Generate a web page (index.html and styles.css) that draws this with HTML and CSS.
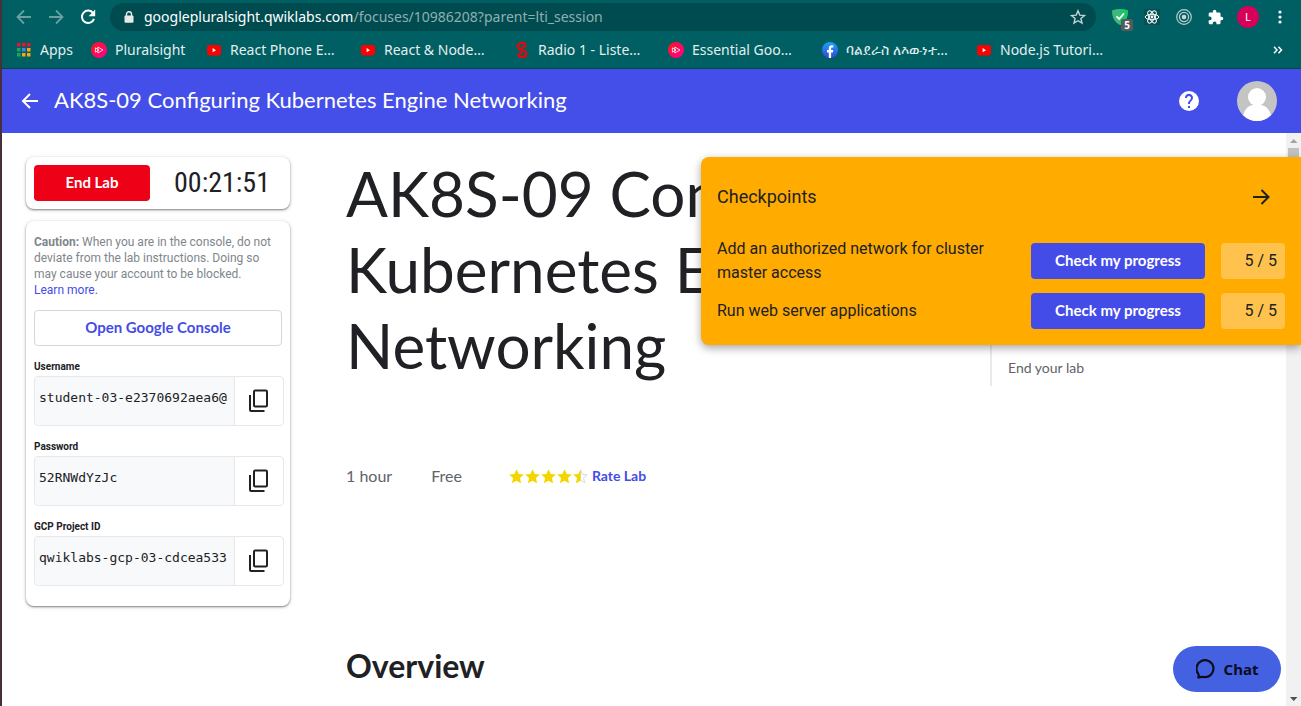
FILE: index.html
```html
<!DOCTYPE html>
<html lang="en">
<head>
<meta charset="utf-8">
<title>AK8S-09 Configuring Kubernetes Engine Networking</title>
<link rel="stylesheet" href="styles.css">
</head>
<body>
<svg class="defs" aria-hidden="true">
  <defs>
    <linearGradient id="pink" x1="0" y1="0" x2="1" y2="1"><stop offset="0" stop-color="#ff1517"/><stop offset="1" stop-color="#ff0095"/></linearGradient>
    <linearGradient id="fbblue" x1="0" y1="0" x2="0" y2="1"><stop offset="0" stop-color="#18a4f8"/><stop offset="1" stop-color="#3a45dc"/></linearGradient>
  </defs>
  <symbol id="play" viewBox="0 0 16 16"><circle cx="8" cy="8" r="8" fill="url(#pink)"/><path d="M6.8 5 12 8 6.800 11ZM4.400 5.800 8 8 4.400 10.200Z" fill="none" stroke="#fff" stroke-width=".8"/></symbol>
  <symbol id="tube" viewBox="0 0 16 16"><rect x="1" y="3" width="14" height="10.5" rx="2.4" fill="#f00"/><path d="M6.6 6.1v4.2L10 8.2z" fill="#fff"/></symbol>
  <symbol id="copy" viewBox="0 0 24 24"><rect x="7" y="1.500" width="13" height="16" rx="1.200" fill="none" stroke="#202124" stroke-width="2"/><path d="M3 6v15a1 1 0 0 0 1 1H17.500" fill="none" stroke="#202124" stroke-width="2"/></symbol>
  <symbol id="star" viewBox="0 0 16 16"><path d="M8 .3l2.300 5 5.500.6-4.100 3.700 1.200 5.600L8 12.500l-4.900 2.700 1.200-5.600L.2 5.900l5.500-.6z"/></symbol>
</svg>

<div class="browser">
  <nav class="toolbar" aria-label="Browser">
    <button class="tool dim" aria-label="Back"><svg viewBox="0 0 16 16"><path d="M15 8H2M8 1.500 1.500 8 8 14.500" fill="none" stroke="currentColor" stroke-width="1.800"/></svg></button>
    <button class="tool dim" aria-label="Forward"><svg viewBox="0 0 16 16"><path d="M1 8h13M8 1.500 14.500 8 8 14.500" fill="none" stroke="currentColor" stroke-width="1.800"/></svg></button>
    <button class="tool" aria-label="Reload"><svg viewBox="0 0 16 16"><path d="M13.200 4.200A6.200 6.200 0 1 0 14 9.800" fill="none" stroke="currentColor" stroke-width="2"/><path d="M15.200.6v6.600H8.600z" fill="currentColor"/></svg></button>
    <div class="address">
      <svg class="lock" viewBox="0 0 10 12"><path d="M2.500 5V3.200a2.500 2.500 0 0 1 5 0V5" fill="none" stroke="#e8eaea" stroke-width="1.400"/><rect x=".5" y="4.600" width="9" height="7.200" rx="1" fill="#e8eaea"/></svg>
      <p class="url">googlepluralsight.qwiklabs.com<span>/focuses/10986208?parent=lti_session</span></p>
      <button class="bookmark-star" aria-label="Bookmark this page"><svg viewBox="0 0 16 16"><path d="M8 1.800l1.800 4.300 4.700.4-3.600 3 1.100 4.600L8 11.700l-4 2.400 1.100-4.600-3.600-3 4.700-.4z" fill="none" stroke="#c4d3d4" stroke-width="1.400"/></svg></button>
    </div>
    <div class="extensions">
    <button class="ext shield" aria-label="Ad blocker, 5 blocked"><svg viewBox="0 0 16 16"><path d="M0 1.500Q4-.2 8 0q4-.2 8 1.500C16 9 13 13.500 8 16 3 13.500 0 9 0 1.500z" fill="#3cb878"/><path d="M8 0q4-.2 8 1.500C16 9 13 13.500 8 16z" fill="#19c46a"/><path d="M4.500 7.300 7.200 10l4.800-5.600" fill="none" stroke="#fff" stroke-width="1.800"/></svg><span class="count">5</span></button>
    <button class="ext" aria-label="React developer tools"><svg viewBox="0 0 16 16"><path d="M0 0h16v16H0z" fill="#064f52"/><g fill="none" stroke="#fff" stroke-width="1"><ellipse cx="8" cy="8" rx="6.800" ry="2.700"/><ellipse cx="8" cy="8" rx="6.800" ry="2.700" transform="rotate(60 8 8)"/><ellipse cx="8" cy="8" rx="6.800" ry="2.700" transform="rotate(120 8 8)"/></g><circle cx="8" cy="8" r="1.400" fill="#fff"/></svg></button>
    <button class="ext" aria-label="Recorder"><svg viewBox="0 0 16 16"><g fill="none" stroke="#b9cbcc" stroke-width="1.200"><circle cx="8" cy="8" r="7.300"/><circle cx="8" cy="8" r="4.600"/></g><circle cx="8" cy="8" r="2.300" fill="#c8d6d7"/></svg></button>
    <button class="ext" aria-label="Extensions"><svg viewBox="1 0 23 23"><path fill="#fff" d="M20.500 11H19V7a2 2 0 0 0-2-2h-4V3.500a2.500 2.500 0 0 0-5 0V5H4a2 2 0 0 0-2 2v3.800h1.500a2.700 2.700 0 0 1 0 5.400H2V20a2 2 0 0 0 2 2h3.800v-1.500a2.700 2.700 0 0 1 5.400 0V22H17a2 2 0 0 0 2-2v-4h1.500a2.500 2.500 0 0 0 0-5z"/></svg></button>
    </div>
    <button class="profile" aria-label="Profile">L</button>
    <button class="kebab" aria-label="Menu"><svg viewBox="0 0 4 14"><g fill="#fff"><circle cx="2" cy="2" r="1.600"/><circle cx="2" cy="7" r="1.600"/><circle cx="2" cy="12" r="1.600"/></g></svg></button>
  </nav>
  <nav class="bookmarks" aria-label="Bookmarks">
    <a class="mark apps" href="#"><svg viewBox="-1 -1 16 16"><path fill="#f01030" d="M0 0h3.500v3.500H0zM5 0h3.500v3.500H5zM10 0h3.500v3.500H10z"/><path fill="#18a85a" d="M0 5h3.500v3.500H0zM0 10h3.500v3.500H0z"/><path fill="#4285f4" d="M5 5h3.500v3.500H5z"/><path fill="#fba90a" d="M10 5h3.500v3.500H10zM5 10h3.500v3.500H5zM10 10h3.500v3.500H10z"/></svg><span>Apps</span></a>
    <a class="mark plural" href="#"><svg><use href="#play"/></svg><span>Pluralsight</span></a>
    <a class="mark" href="#"><svg><use href="#tube"/></svg><span>React Phone E…</span></a>
    <a class="mark" href="#"><svg><use href="#tube"/></svg><span>React &amp; Node…</span></a>
    <a class="mark" href="#"><svg viewBox="0 0 16 16"><path d="M11.800 4.500C11.800 2 10.200 1 8 1 5.500 1 3.800 2.300 3.800 4.300 3.800 6 5 6.800 6.500 7.500L9.500 9M4.200 11.500C4.200 14 5.800 15 8 15c2.500 0 4.200-1.300 4.200-3.300C12.200 10 11 9.200 9.500 8.500L6.500 7" fill="none" stroke="#f40008" stroke-width="2.200"/><path d="M7.500 4 11 6M5 10l3.500 2" fill="none" stroke="#f40008" stroke-width="1.700"/></svg><span>Radio 1 - Liste…</span></a>
    <a class="mark" href="#"><svg><use href="#play"/></svg><span>Essential Goo…</span></a>
    <a class="mark" href="#"><svg viewBox="0 0 16 16"><circle cx="8" cy="8" r="8" fill="url(#fbblue)"/><path d="M6.800 16v-5.600H5V8h1.800V6.300c0-2 1.200-3 3-3l1.500.1v2h-1c-.9 0-1.200.5-1.200 1.200V8h2.200l-.4 2.400H9.100V16z" fill="#fff"/></svg><span>ባልደራስ ለእውነተ…</span></a>
    <a class="mark" href="#"><svg><use href="#tube"/></svg><span>Node.js Tutori…</span></a>
    <button class="more" aria-label="More bookmarks"><svg viewBox="0 0 10 8"><path d="m1 .8 3 3.200-3 3.200M5.500.8l3 3.200-3 3.200" fill="none" stroke="#fff" stroke-width="1.500"/></svg></button>
  </nav>
</div>

<div class="page">
  <header class="header">
    <a class="back" href="#" aria-label="Back"><svg viewBox="0 0 18 18"><path d="M17 9H2M9 2 2 9l7 7" fill="none" stroke="#fff" stroke-width="2"/></svg></a>
    <p class="lab-name">AK8S-09 Configuring Kubernetes Engine Networking</p>
    <button class="help" aria-label="Help"><svg viewBox="0 0 20 20"><path fill="#fff" d="M10 0a10 10 0 1 0 0 20 10 10 0 0 0 0-20zm1 17H9v-2h2zm2.070-7.750-.9.920C11.450 10.900 11 11.500 11 13H9v-.5c0-1.100.450-2.100 1.170-2.830l1.240-1.260A2 2 0 1 0 8 7H6a4 4 0 1 1 7.070 2.250z"/></svg></button>
    <button class="avatar" aria-label="Account"><svg viewBox="0 0 40 40"><circle cx="20" cy="20" r="20" fill="#c4c4c4"/><circle cx="20" cy="16" r="9" fill="#fff"/><path d="M6 34Q9 25 15.500 24h9Q31 25 34 34 28 40 20 40T6 34z" fill="#fff"/></svg></button>
  </header>

  <div class="body">
    <div class="content">
      <aside class="side">
        <section class="card timer-card">
          <button class="end">End Lab</button>
          <time class="timer">00:21:51</time>
        </section>
        <section class="card access">
          <p class="caution"><strong>Caution:</strong> When you are in the console, do not deviate from the lab instructions. Doing so may cause your account to be blocked. <a href="#">Learn more.</a></p>
          <button class="console">Open Google Console</button>
          <div class="field"><label for="user">Username</label>
            <div class="row"><input id="user" readonly value="student-03-e2370692aea6@"><button aria-label="Copy username"><svg><use href="#copy"/></svg></button></div></div>
          <div class="field"><label for="pass">Password</label>
            <div class="row"><input id="pass" readonly value="52RNWdYzJc"><button aria-label="Copy password"><svg><use href="#copy"/></svg></button></div></div>
          <div class="field"><label for="proj">GCP Project ID</label>
            <div class="row"><input id="proj" readonly value="qwiklabs-gcp-03-cdcea533"><button aria-label="Copy project ID"><svg><use href="#copy"/></svg></button></div></div>
        </section>
      </aside>
      <main class="main">
        <h1>AK8S-09 Configuring Kubernetes Engine Networking</h1>
        <div class="meta">
          <span class="fact">1 hour</span><span class="fact">Free</span>
          <span class="stars" role="img" aria-label="4.5 stars"><svg><use href="#star"/></svg><svg><use href="#star"/></svg><svg><use href="#star"/></svg><svg><use href="#star"/></svg><svg viewBox="0 0 16 16"><path fill="#fff" stroke="#ccc" stroke-width=".8" d="M8 1.200l2 4.500 5 .5-3.800 3.300 1.200 5L8 12z"/><path d="M8 .3v12.200l-4.900 2.700 1.200-5.600L.2 5.900l5.500-.6z"/></svg></span>
          <a class="rate" href="#">Rate Lab</a>
        </div>
        <h2>Overview</h2>
      </main>
      <nav class="outline" aria-label="Lab outline"><a href="#">End your lab</a></nav>
    </div>
    <div class="scrollbar" aria-hidden="true">
      <svg viewBox="0 0 15 15"><path d="M4 10h7.500L7.700 6z" fill="#a3a3a3"/></svg>
      <div class="thumb"></div>
      <svg viewBox="0 0 15 15"><path d="M4 6h7.500L7.700 10z" fill="#505050"/></svg>
    </div>

    <section class="checkpoints" aria-label="Checkpoints">
      <div class="cp-head"><h3>Checkpoints</h3><button aria-label="Hide checkpoints"><svg viewBox="0 0 18 18"><path d="M1 9h15M9.500 2l7 7-7 7" fill="none" stroke="#202124" stroke-width="2"/></svg></button></div>
      <div class="cp"><p>Add an authorized network for cluster master access</p><button>Check my progress</button><span class="score">5 / 5</span></div>
      <div class="cp"><p>Run web server applications</p><button>Check my progress</button><span class="score">5 / 5</span></div>
    </section>
    <button class="chat"><svg viewBox="0 0 20 20"><path d="M2.200 18.500c.8-1.200.8-2.200.1-3.600A8.500 8.500 0 1 1 7.500 18c-1.800-.5-3.300.4-5.300.5z" fill="none" stroke="#0b0c1c" stroke-width="2.200" stroke-linejoin="round"/></svg>Chat</button>
  </div>
</div>
</body>
</html>
```

FILE: styles.css
```css
* { box-sizing: border-box; }
body {
  margin: 0;
  height: 100vh;
  display: flex;
  flex-direction: column;
  overflow: hidden;
  background: #fff;
  color: #202124;
  font-family: Roboto, sans-serif;
  font-size: 16px;
  border-left: 2px solid #47303b;
}
button { border: 0; padding: 0; background: none; color: inherit; font: inherit; cursor: pointer; }
a { color: #444ce7; text-decoration: none; }
h1, h2, h3, p { margin: 0; }
svg { display: block; }
.defs { position: absolute; width: 0; height: 0; }

.browser { background: #005f62; color: #e4eeee; border-bottom: 1px solid #004a4e; font-family: "Noto Sans", sans-serif; }
.toolbar { display: flex; align-items: center; height: 34px; padding: 0 19px 0 14px; gap: 16px; }
.tool { width: 16px; height: 16px; color: #fff; }
.tool.dim { color: #6b9fa1; }
.address {
  flex: 1;
  display: flex;
  align-items: center;
  gap: 10px;
  height: 28px;
  margin-left: -2px;
  padding: 0 10px 0 14px;
  border-radius: 14px;
  background: #004b4f;
}
.lock { width: 10px; height: 12px; }
.url { flex: 1; color: #fff; font-size: 14px; line-height: 20px; }
.url span { color: #8fb0b2; }
.bookmark-star { width: 16px; height: 16px; }
.extensions { display: flex; gap: 16px; margin-right: -3px; }
.ext { position: relative; width: 16px; height: 16px; }
.count {
  position: absolute;
  left: 9px;
  top: 10px;
  width: 12px;
  height: 12px;
  border-radius: 2px;
  background: #555a5c;
  color: #fff;
  font-size: 10px;
  font-weight: 700;
  line-height: 12px;
}
.profile { flex: none; width: 22px; height: 22px; margin-right: 3px; border-radius: 50%; background: #d60058; color: #fff; font-size: 11px; line-height: 22px; }
.kebab { flex: none; width: 4px; height: 14px; }
.bookmarks { display: flex; align-items: center; height: 34px; padding: 0 18px 2px 14px; }
.mark { flex: none; display: flex; align-items: center; gap: 8px; width: 154px; color: inherit; font-size: 14px; line-height: 20px; white-space: nowrap; }
.mark svg { flex: none; width: 16px; height: 16px; }
.apps { width: 75px; }
.plural { width: 115px; }
.more { width: 10px; height: 8px; margin-left: auto; }

.page { flex: 1; min-height: 0; display: flex; flex-direction: column; }
.header { flex: none; display: flex; align-items: center; height: 64px; padding: 0 24px 0 19px; background: #444ee8; color: #fff; }
.back { width: 18px; height: 18px; }
.lab-name { flex: 1; margin-left: 15px; padding-bottom: 2px; font: 22px/28px Lato, sans-serif; }
.help { width: 20px; height: 20px; margin-right: 38px; }
.avatar { width: 40px; height: 40px; }

.body { position: relative; flex: 1; min-height: 0; display: flex; }
.content { flex: 1; min-width: 0; display: grid; grid-template-columns: 264px minmax(0, 1fr) 272px; column-gap: 24px; padding: 22px 0 0 24px; }
.side { padding-top: 2px; }
.card { background: #fff; border-radius: 8px; box-shadow: 0 1px 2px rgba(32, 33, 36, .5), 0 1px 4px rgba(32, 33, 36, .15); }
.timer-card { display: flex; align-items: center; height: 52px; padding: 8px; margin-bottom: 12px; }
.end { width: 116px; height: 36px; padding-bottom: 2px; border-radius: 4px; background: #ee0016; color: #fff; font: 15px/20px Lato, sans-serif; font-weight: 700; }
.timer { flex: 1; padding-left: 12px; text-align: center; font: 28px/36px "Liberation Sans Narrow", "Roboto Condensed", Roboto, sans-serif; }
.access { padding: 13px 8px 20px; }
.caution { font-size: 12px; line-height: 16px; color: #80868b; }
.caution a { display: block; }
.console { display: block; width: 100%; height: 36px; padding-bottom: 2px; margin-top: 12px; border: 1px solid #d5d7dd; border-radius: 4px; color: #444ce7; font: 15px/20px Lato, sans-serif; font-weight: 700; }
.field { margin-top: 14px; }
.field label { display: block; height: 16px; font-size: 10px; line-height: 14px; font-weight: 700; }
.row { display: flex; height: 50px; margin-right: -2px; border: 1px solid #e6e8eb; border-radius: 4px; }
.row input { flex: 1; min-width: 0; padding: 0 3px 6px 4px; border: 0; border-right: 1px solid #e6e8eb; border-radius: 4px 0 0 4px; background: #f8f9fb; color: #202124; font: 13px/16px "DejaVu Sans Mono", monospace; }
.row button { width: 48px; display: grid; place-items: center; }
.row svg { width: 24px; height: 24px; }

.main { padding-left: 32px; }
h1 { font: 62px/76px Lato, sans-serif; }
.meta { display: flex; align-items: center; margin-top: 81px; color: #5f6368; font: 16px/24px Lato, sans-serif; }
.fact { margin-right: 39px; }
.stars { display: flex; gap: 1px; margin: 0 4px 0 8px; fill: #f2d600; }
.stars svg { width: 15px; height: 15px; }
.rate { font-size: 14px; font-weight: 700; }
h2 { margin-top: 160px; font: 32px/36px Lato, sans-serif; font-weight: 700; }
.outline { align-self: start; height: 221px; display: flex; align-items: flex-end; padding: 0 0 6px 16px; margin: 10px 0 0 -24px; border-left: 2px solid #e8eaed; }
.outline a { color: #5f6368; font: 14px/24px Lato, sans-serif; }

.scrollbar { width: 15px; display: flex; flex-direction: column; background: #f1f1f1; }
.scrollbar svg { width: 15px; height: 15px; }
.thumb { width: 11px; height: 40px; margin: 0 2px auto; background: #c1c1c1; }

.checkpoints { position: absolute; top: 24px; right: 0; width: 600px; padding: 24px 16px 16px; border-radius: 8px 0 0 8px; background: #ffab00; box-shadow: 0 3px 8px rgba(32, 33, 36, .4); }
.cp-head { display: flex; justify-content: space-between; align-items: center; height: 32px; padding-right: 15px; margin-bottom: 24px; }
.cp-head h3 { font-size: 18px; line-height: 24px; font-weight: 400; }
.cp-head svg { width: 18px; height: 18px; }
.cp { display: grid; grid-template-columns: minmax(0, 1fr) 174px 64px; column-gap: 16px; align-items: center; line-height: 24px; }
.cp + .cp { margin-top: 8px; }
.cp p { padding-right: 20px; }
.cp button { height: 36px; padding-bottom: 2px; border-radius: 4px; background: #444ce7; color: #fff; font: 15px/20px Lato, sans-serif; font-weight: 700; }
.score { height: 36px; padding-right: 8px; border-radius: 4px; background: #ffc34d; line-height: 36px; text-align: right; }
.chat { position: absolute; right: 20px; bottom: 14px; display: flex; align-items: center; justify-content: center; gap: 8px; width: 108px; height: 46px; border-radius: 23px; background: #4361e0; color: #0b0c1c; font: 15px/20px "Noto Sans", sans-serif; font-weight: 700; }
.chat svg { width: 20px; height: 20px; }
```
